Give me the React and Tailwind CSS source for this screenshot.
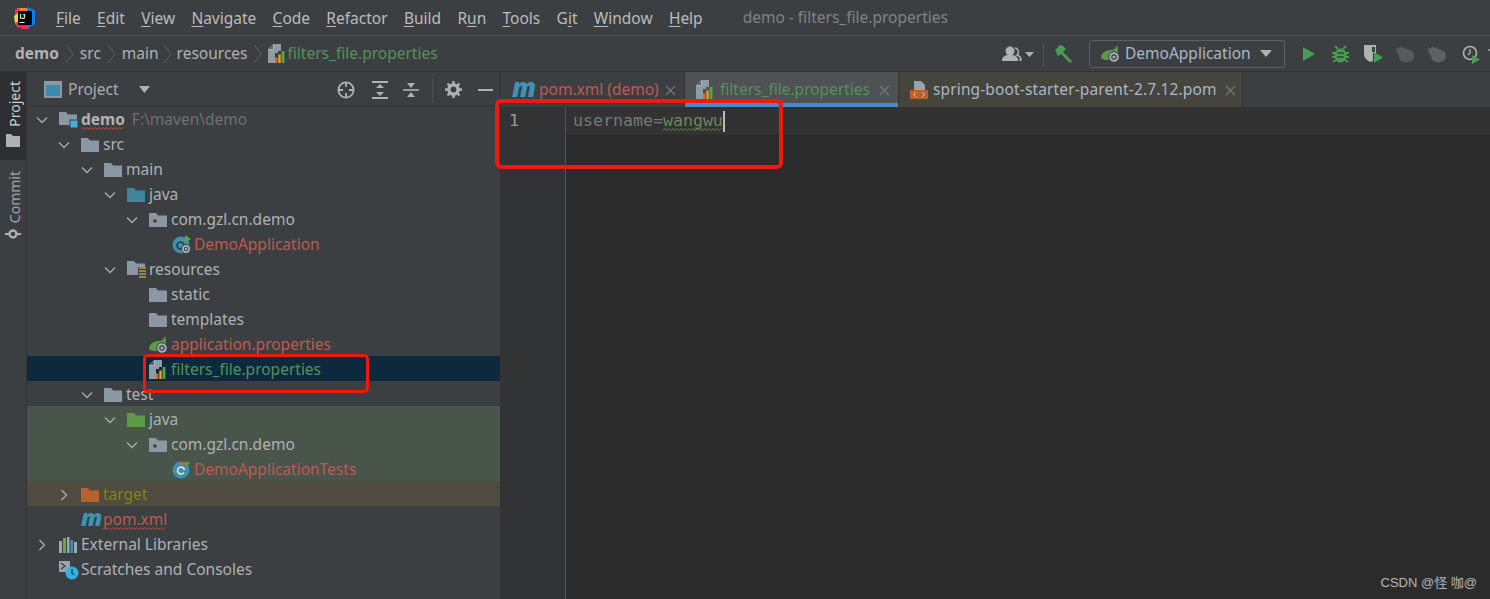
import React from "react";

const Folder = ({ c = "#8b98a3", dot, className = "" }) => (
  <svg width="18" height="15" viewBox="0 0 18 15" className={className}>
    <path d="M0 1h7l2 2.500h9V15H0z" fill={c} />
    {dot && <circle cx="6" cy="9" r="1.8" fill="#3c3f41" />}
  </svg>
);

const Chevron = ({ open }) => (
  <svg width="12" height="12" viewBox="0 0 12 12" fill="none" stroke="#a9adb0" strokeWidth="1.3">
    {open ? <path d="M1 3.500l5 5 5-5" /> : <path d="M3.500 1l5 5-5 5" />}
  </svg>
);

const PropsIcon = () => (
  <svg width="17" height="19" viewBox="0 0 17 19">
    <path d="M5 0h8v7h-3v2H7v10H0V5z" fill="#8f9ba6" />
    <path d="M5 0v5H0z" fill="#5f666c" />
    <path d="M5.500 1v4.500H1" fill="none" stroke="#b5bec6" strokeWidth="0.8" />
    <rect x="7" y="13.500" width="2.400" height="5.500" fill="#e8641a" />
    <rect x="10.300" y="10.500" width="2.400" height="8.500" fill="#e9a227" />
    <rect x="13.600" y="7" width="2.800" height="12" fill="#59a83f" />
  </svg>
);

const SpringLeaf = ({ gear = true }) => (
  <svg width="20" height="18" viewBox="0 0 20 18">
    <path d="M0 13c0-6 6-8 10-8 3 0 5-2 6-5 2 6 1 12-4 14-5 2-10 1-12-1z" fill="#5c9a46" />
    {gear && <circle cx="13" cy="12" r="5.300" fill="#a4adb5" stroke="#3c3f41" strokeWidth="1" />}
    {gear && <circle cx="13" cy="12" r="2.200" fill="none" stroke="#3c3f41" strokeWidth="1.200" />}
  </svg>
);

const MIcon = ({ tab }) => (
  <span
    className={`italic font-extrabold leading-none text-[#3f92b5] -mt-[5px] ${tab ? "text-[26px]" : "text-[23px]"}`}
    style={{ fontFamily: '"Open Sans", sans-serif' }}
  >
    m
  </span>
);

const ClassIcon = ({ test }) => (
  <svg width="20" height="19" viewBox="0 0 20 19">
    <circle cx="9" cy="10" r="8.500" fill="#3f8fae" />
    {test ? (
      <>
        <path d="M12.500 10a3.500 3.500 0 1 0-.6 2.600" fill="none" stroke="#e6e9eb" strokeWidth="1.600" />
        <path d="M10 1l4 2.500-4 2.500z" fill="#e8541a" />
        <path d="M14 1l4 2.500-4 2.500z" fill="#59a83f" />
      </>
    ) : (
      <>
        <path d="M12 10a3.500 3.500 0 1 0-.6 2.600" fill="none" stroke="#333" strokeWidth="1.600" />
        <path d="M13 0l6 4-6 4z" fill="#59a83f" />
        <circle cx="14" cy="14" r="4.600" fill="#a4adb5" stroke="#3c3f41" />
        <circle cx="14" cy="14" r="1.800" fill="none" stroke="#3c3f41" />
      </>
    )}
  </svg>
);

const RED = "text-[#c0594f]";
const GREEN = "text-[#549159]";

const rows = [
  { d: 0, open: true, icon: "module", label: "demo", extra: "F:\\maven\\demo" },
  { d: 1, open: true, icon: <Folder />, label: "src" },
  { d: 2, open: true, icon: <Folder />, label: "main" },
  { d: 3, open: true, icon: <Folder c="#3e86a0" />, label: "java" },
  { d: 4, open: true, icon: <Folder dot />, label: "com.gzl.cn.demo" },
  { d: 5, icon: <ClassIcon />, label: "DemoApplication", color: RED },
  { d: 3, open: true, icon: "res", label: "resources" },
  { d: 4, icon: <Folder />, label: "static" },
  { d: 4, icon: <Folder />, label: "templates" },
  { d: 4, icon: <SpringLeaf />, label: "application.properties", color: RED },
  { d: 4, icon: <PropsIcon />, label: "filters_file.properties", color: GREEN, bg: "bg-[#0d293e]" },
  { d: 2, open: true, icon: <Folder />, label: "test" },
  { d: 3, open: true, icon: <Folder c="#5b9a47" />, label: "java", bg: "bg-[#49544a]" },
  { d: 4, open: true, icon: <Folder dot />, label: "com.gzl.cn.demo", bg: "bg-[#49544a]" },
  { d: 5, icon: <ClassIcon test />, label: "DemoApplicationTests", color: RED, bg: "bg-[#49544a]" },
  { d: 1, open: false, icon: <Folder c="#b9622f" />, label: "target", color: "text-[#848504]", bg: "bg-[#4f4b41]" },
  { d: 1, icon: <MIcon />, label: "pom.xml", color: RED, squiggle: true },
  { d: 0, open: false, icon: "lib", label: "External Libraries" },
  { d: 0, icon: "scratch", label: "Scratches and Consoles" },
];

const ModuleIcon = () => (
  <svg width="20" height="17" viewBox="0 0 20 17">
    <path d="M0 1h7l2 2.500h9V14H0z" fill="#8b98a3" />
    <rect x="11" y="9" width="8" height="8" fill="#3fb0e0" stroke="#3c3f41" />
  </svg>
);
const ResIcon = () => (
  <svg width="20" height="17" viewBox="0 0 20 17">
    <path d="M0 0h7l2 2.500h9V14H0z" fill="#8b98a3" />
    <path d="M11 6h8v11h-8z" fill="#3c3f41" />
    <path d="M12 7h7M12 10h7M12 13h7M12 16h7" stroke="#c79a3e" strokeWidth="1.600" />
  </svg>
);
const LibIcon = () => (
  <svg width="18" height="16" viewBox="0 0 18 16">
    <rect x="0" y="4" width="3" height="12" fill="#a0a7ad" />
    <rect x="4" y="1" width="3" height="15" fill="#6aa84f" />
    <rect x="8" y="0" width="2.500" height="16" fill="#a0a7ad" />
    <rect x="11.500" y="3" width="2.500" height="13" fill="#3f92b5" />
    <rect x="15" y="5" width="3" height="11" fill="#a0a7ad" />
  </svg>
);
const ScratchIcon = () => (
  <svg width="20" height="20" viewBox="0 0 20 20">
    <path d="M0 1h11v11H0z" fill="#9aa4ac" />
    <path d="M2 3l4 3-4 3" fill="none" stroke="#3c3f41" strokeWidth="1.300" />
    <circle cx="13" cy="13" r="6.500" fill="#35b0e6" />
    <path d="M13 9v4.500l2.500 1.500" fill="none" stroke="#1d3b4a" strokeWidth="1.300" />
  </svg>
);

const iconOf = (i) =>
  i === "module" ? <ModuleIcon /> : i === "res" ? <ResIcon /> : i === "lib" ? <LibIcon /> : i === "scratch" ? <ScratchIcon /> : i;

const Squiggle = ({ w, c, className = "" }) => (
  <svg width={w} height="3" viewBox={`0 0 ${w} 3`} className={className}>
    <path
      d={Array.from({ length: Math.ceil(w / 4) }, (_, i) => `${i === 0 ? "M" : "L"}${i * 4} 2.500L${i * 4 + 2} 0.500`).join("")}
      fill="none"
      stroke={c}
      strokeWidth="1"
    />
  </svg>
);

const TreeRow = ({ r }) => {
  const pad = { 0: "pl-[8px]", 1: "pl-[30px]", 2: "pl-[53px]", 3: "pl-[76px]", 4: "pl-[98px]", 5: "pl-[121px]" }[r.d];
  return (
    <div className={`h-[25px] pt-[2px] flex items-center shrink-0 ${pad} ${r.bg || ""}`}>
      <span className="w-[23px] pl-[1px] shrink-0 flex items-center">{r.open !== undefined && <Chevron open={r.open} />}</span>
      <span className="w-[23px] pl-[1px] shrink-0 flex items-center justify-start">{iconOf(r.icon)}</span>
      <span className={`relative ${r.color || "text-[#afb1b3]"} ${r.label === "demo" ? "font-bold" : ""}`}>
        {r.label}
        {r.label === "demo" && <Squiggle w={44} c="#d04437" className="absolute left-0 top-[19px]" />}
        {r.squiggle && <Squiggle w={64} c="#d04437" className="absolute left-0 top-[19px]" />}
      </span>
      {r.extra && <span className="ml-[7px] text-[#6e6f70]">{r.extra}</span>}
    </div>
  );
};

const MenuItem = ({ t, u = 0 }) => (
  <span className="text-[#bbbbbb]">
    {t.slice(0, u)}
    <span className="underline underline-offset-2">{t[u]}</span>
    {t.slice(u + 1)}
  </span>
);

const Tab = ({ icon, label, color, active, w, iconW = "w-[24px]", bg = "bg-[#3c3f41]", closeR = "right-[8px]" }) => (
  <div className={`h-[35px] flex items-center pl-[11px] shrink-0 border-r border-[#323232] relative ${active ? "bg-[#4e5254]" : bg} ${w}`}>
    <span className={`${iconW} shrink-0 flex items-center`}>{icon}</span>
    <span className={color}>{label}</span>
    <svg width="11" height="11" viewBox="0 0 11 11" stroke="#72777a" strokeWidth="1.300" className={`absolute top-[13px] ${closeR}`}>
      <path d="M1 1l9 9M10 1l-9 9" />
    </svg>
    {active && <div className="absolute left-0 right-0 bottom-0 h-[4px] bg-[#4a88c7]" />}
  </div>
);

const Logo = () => (
  <svg width="22" height="22" viewBox="0 0 22 22">
    <path d="M3 1h11l2 5-12 3z" fill="#fc801d" />
    <path d="M1 3l4-2 3 18-4 2-3-4z" fill="#fe2857" />
    <path d="M0 9l4-3 1 8-4 2z" fill="#f6d52a" />
    <path d="M13 0l8 3 0 14-8 5z" fill="#087cfa" />
    <path d="M6 20l6-3 3 5H8z" fill="#fe2857" />
    <rect x="4" y="4" width="14" height="14" fill="#000" />
    <text x="5.500" y="11.500" fontSize="7" fontWeight="700" fill="#fff" fontFamily="Liberation Sans">IJ</text>
    <rect x="5.500" y="15" width="5" height="1" fill="#fff" />
  </svg>
);

const Sep = ({ className = "mx-[5px]" }) => (
  <svg width="9" height="20" viewBox="0 0 9 20" fill="none" stroke="#5e6163" className={className}>
    <path d="M1 1l7 9-7 9" />
  </svg>
);

const Bird = ({ c = "#58595a" }) => (
  <svg width="20" height="18" viewBox="0 0 20 18">
    <path d="M1 2l3 2 1-3 2 2 2-1 1 2c4 0 9 2 9 7 0 5-5 7-9 6-3 0-6-2-6-6-2-2-3-6-3-9z" fill={c} />
  </svg>
);

export default function App() {
  return (
    <div
      className="relative w-[1490px] h-[599px] overflow-hidden bg-[#3c3f41] text-[15.5px] text-[#afb1b3] flex flex-col"
      style={{ fontFamily: '"Noto Sans", sans-serif' }}
    >
      {/* Menu bar */}
      <div className="h-[36px] shrink-0 flex items-center border-b border-[#515151] pl-[14px]">
        <Logo />
        <div className="flex items-center gap-[16.300px] ml-[20px] mt-[2px]">
          <MenuItem t="File" />
          <MenuItem t="Edit" />
          <MenuItem t="View" />
          <MenuItem t="Navigate" />
          <MenuItem t="Code" />
          <MenuItem t="Refactor" />
          <MenuItem t="Build" />
          <MenuItem t="Run" u={1} />
          <MenuItem t="Tools" />
          <MenuItem t="Git" u={1} />
          <MenuItem t="Window" />
          <MenuItem t="Help" />
        </div>
        <span className="ml-[40px] text-[#808283]">demo - filters_file.properties</span>
      </div>

      {/* Breadcrumb / toolbar */}
      <div className="h-[36px] shrink-0 flex items-center border-b border-[#323232] pl-[15px]">
        <span className="font-bold text-[#afb1b3]">demo</span>
        <Sep className="mx-[6px]" />
        <span>src</span>
        <Sep className="mx-[6px]" />
        <span>main</span>
        <Sep className="mx-[4.500px]" />
        <span>resources</span>
        <Sep className="mx-[5.500px]" />
        <span className="mr-[3px] flex"><PropsIcon /></span>
        <span className={GREEN}>filters_file.properties</span>

        <div className="ml-auto flex items-center relative pr-[9px]">
          <svg width="34" height="18" viewBox="0 0 34 18" className="mr-[8px]">
            <circle cx="9" cy="6" r="4.500" fill="#afb1b3" />
            <path d="M1 16c0-5 3-6 8-6s8 1 8 6z" fill="#afb1b3" />
            <path d="M14 3a4 4 0 0 1 2 7c3 1 4 2 4 5h-2" fill="none" stroke="#afb1b3" strokeWidth="1.500" />
            <path d="M24 7h9l-4.500 5z" fill="#afb1b3" />
          </svg>
          <div className="w-px h-[24px] bg-[#515151] mr-[10px]" />
          <svg width="20" height="20" viewBox="0 0 20 20" className="mr-[15px]">
            <path d="M1 6l5-5 3 1 3 3-3 3 9 9-2 2-9-9-3 2z" fill="#499c54" />
          </svg>
          <div className="w-[196px] h-[28px] rounded-[3px] border border-[#5e6163] flex items-center pl-[11px] mr-[17px]">
            <SpringLeaf />
            <span className="ml-[4px] text-[#a9b7c6]">DemoApplication</span>
            <svg width="12" height="7" viewBox="0 0 12 7" className="ml-[9px]"><path d="M0 0h12L6 7z" fill="#afb1b3" /></svg>
          </div>
          <svg width="14" height="16" viewBox="0 0 14 16" className="mr-[16px]"><path d="M1 1l12 7-12 7z" fill="#499c54" /></svg>
          <svg width="17" height="18" viewBox="0 0 17 18" className="mr-[15px]">
            <ellipse cx="8.500" cy="10.500" rx="6" ry="7" fill="#499c54" />
            <path d="M3 1l3 3M14 1l-3 3M0 8h3M14 8h3M0 12h3M14 12h3M1 17l3-2M16 17l-3-2" stroke="#499c54" strokeWidth="1.800" />
            <path d="M5 8h7M5 12h7" stroke="#3c3f41" strokeWidth="1.500" />
          </svg>
          <svg width="19" height="19" viewBox="0 0 19 19" className="mr-[12px]">
            <path d="M0 1h12v8H9v8L6 18c-3-2-6-4-6-8z" fill="#afb1b3" />
            <path d="M8 3h3v5H8z" fill="#3c3f41" />
            <path d="M10 8l9 5.500-9 5.500z" fill="#499c54" />
          </svg>
          <span className="mr-[12px] flex"><Bird /></span>
          <span className="mr-[14px] flex"><Bird c="#5f6061" /></span>
          <svg width="20" height="20" viewBox="0 0 20 20">
            <circle cx="9" cy="9" r="6.500" fill="none" stroke="#afb1b3" strokeWidth="1.600" />
            <path d="M9 5v4l-2 2" fill="none" stroke="#afb1b3" strokeWidth="1.300" />
            <path d="M11 11l8 4.500-8 4.500z" fill="#499c54" />
          </svg>
          <div className="absolute right-0 top-[9px] w-[2px] h-[2px] bg-[#8a8c8e]" />
        </div>
      </div>

      <div className="flex-1 flex min-h-0">
        {/* Tool strip */}
        <div className="w-[27px] shrink-0 border-r border-[#323232] flex flex-col">
          <div className="h-[88px] bg-[#2d2f30] flex flex-col items-center justify-start pt-[9px] pl-[3px]">
            <span className="text-[14px] text-[#d0d2d4] leading-none [writing-mode:vertical-rl] rotate-180">Project</span>
            <svg width="14" height="13" viewBox="0 0 14 13" className="mt-[7px] -ml-[3px]"><path d="M0 0h5l2 2h7v11H0z" fill="#afb1b3" /></svg>
          </div>
          <div className="flex flex-col items-center pt-[11px] pl-[3px]">
            <span className="text-[14px] text-[#a0a2a4] leading-none [writing-mode:vertical-rl] rotate-180">Commit</span>
            <svg width="16" height="12" viewBox="0 0 16 12" className="mt-[5px] -ml-[3px]">
              <circle cx="8" cy="6" r="3.500" fill="none" stroke="#afb1b3" strokeWidth="2.400" />
              <path d="M0 6h4M12 6h4" stroke="#afb1b3" strokeWidth="1.800" />
            </svg>
          </div>
        </div>

        {/* Project panel */}
        <div className="w-[474px] shrink-0 flex flex-col border-r border-[#323232]">
          <div className="h-[34px] pt-[2px] shrink-0 flex items-center border-b border-[#323232] pl-[17px]">
            <svg width="18" height="17" viewBox="0 0 18 17">
              <rect width="18" height="17" fill="#8b98a3" />
              <rect x="2" y="4" width="14" height="11" fill="#3d8aab" />
            </svg>
            <span className="ml-[6px] text-[#a9adb0]">Project</span>
            <svg width="11" height="7" viewBox="0 0 11 7" className="ml-[20px]"><path d="M0 0h11L5.500 7z" fill="#afb1b3" /></svg>
            <div className="ml-auto flex items-center mr-[7px]">
              <svg width="18" height="18" viewBox="0 0 18 18" fill="none" stroke="#afb1b3" strokeWidth="1.800" className="mr-[17px]">
                <circle cx="9" cy="9" r="7.600" />
                <path d="M9 1v5M9 12v5M1 9h5M12 9h5" />
              </svg>
              <svg width="16" height="18" viewBox="0 0 16 18" className="mr-[15px]">
                <path d="M0 1h16M0 17h16" stroke="#afb1b3" strokeWidth="2" />
                <path d="M8 3l4 4H4zM8 15l4-4H4z" fill="#afb1b3" />
              </svg>
              <svg width="16" height="18" viewBox="0 0 16 18" className="mr-[13px]">
                <path d="M0 9h16" stroke="#afb1b3" strokeWidth="1.600" />
                <path d="M8 7l4-5H4zM8 11l4 5H4z" fill="#afb1b3" />
              </svg>
              <div className="w-px h-[24px] bg-[#515151] mr-[12px]" />
              <svg width="17" height="17" viewBox="0 0 17 17" className="mr-[16px]">
                <circle cx="8.500" cy="8.500" r="4.600" fill="none" stroke="#afb1b3" strokeWidth="3.400" />
                <path d="M8.500 0v3M8.500 14v3M0 8.500h3M14 8.500h3M2.500 2.500l2 2M12.500 12.500l2 2M14.500 2.500l-2 2M4.500 12.500l-2 2" stroke="#afb1b3" strokeWidth="2.400" />
              </svg>
              <div className="w-[15px] h-[2px] bg-[#afb1b3]" />
            </div>
          </div>
          <div className="flex flex-col">
            {rows.map((r, i) => (
              <TreeRow key={i} r={r} />
            ))}
          </div>
        </div>

        {/* Editor */}
        <div className="flex-1 flex flex-col min-w-0 bg-[#2b2b2b]">
          <div className="h-[35px] shrink-0 flex bg-[#3c3f41]">
            <Tab w="w-[184px]" iconW="w-[27px]" icon={<MIcon tab />} label="pom.xml (demo)" color={RED} />
            <Tab w="w-[214px]" active icon={<PropsIcon />} label="filters_file.properties" color={GREEN} />
            <Tab
              w="w-[344px]"
              bg="bg-[#45443d]"
              closeR="right-[6px]"
              iconW="w-[23px]"
              icon={
                <svg width="18" height="18" viewBox="0 0 18 18">
                  <path d="M4 0h7l4 4v6H4z" fill="#97a4af" />
                  <rect x="0" y="9" width="18" height="9" fill="#b9622f" />
                  <path d="M6 11l-2.500 2.500L6 16M12 11l2.500 2.500L12 16" fill="none" stroke="#ddd" strokeWidth="1" />
                </svg>
              }
              label="spring-boot-starter-parent-2.7.12.pom"
              color="text-[#a9b7c6] tracking-[0.13px]"
            />
          </div>
          <div className="flex-1 flex min-h-0">
            <div
              className="w-[65px] shrink-0 border-r border-[#555555] bg-[#313335] pt-[3px] pl-[8px] text-[#a39a8a] text-[16.6px] leading-[22px]"
              style={{ fontFamily: '"DejaVu Sans Mono", monospace' }}
            >
              1
            </div>
            <div className="flex-1 flex flex-col">
              <div
                className="h-[28px] shrink-0 bg-[#323232] flex items-center pl-[7px] text-[16.6px] text-[#74787b]"
                style={{ fontFamily: '"DejaVu Sans Mono", monospace' }}
              >
                <span>username=</span>
                <span className="relative text-[#6a8759]">
                  wangwu
                  <Squiggle w={60} c="#6a8759" className="absolute left-0 top-[19px]" />
                </span>
                <span className="w-[2px] h-[21px] bg-[#bbbbbb]" />
              </div>
            </div>
          </div>
        </div>
      </div>

      {/* Annotations drawn over the screenshot */}
      <div className="absolute left-[495px] top-[99px] w-[288px] h-[70px] border-[4px] border-[#f0190f] rounded-[6px]" />
      <div className="absolute left-[143px] top-[354px] w-[226px] h-[39px] border-[3px] border-[#f0190f] rounded-[5px]" />
      <div
        className="absolute right-[13px] bottom-[7px] text-[13px] text-[#b5b5b5]"
        style={{ fontFamily: '"Liberation Sans", "Noto Sans CJK SC", sans-serif' }}
      >
        CSDN @怪 咖@
      </div>
    </div>
  );
}
